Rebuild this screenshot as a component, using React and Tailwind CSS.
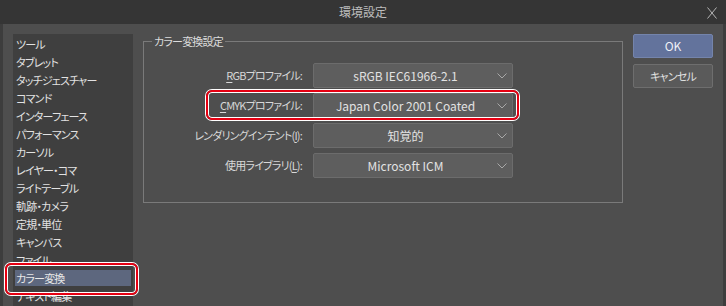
const items = [
  "ツール",
  "タブレット",
  "タッチジェスチャー",
  "コマンド",
  "インターフェース",
  "パフォーマンス",
  "カーソル",
  "レイヤー・コマ",
  "ライトテーブル",
  "軌跡・カメラ",
  "定規・単位",
  "キャンバス",
  "ファイル",
  "カラー変換",
  "テキスト編集",
];

function Chevron() {
  return (
    <svg width="10" height="6" viewBox="0 0 10 6" className="mr-[5px] shrink-0">
      <path d="M0.5 0.5 L5 5 L9.5 0.5" fill="none" stroke="#a8a8a8" strokeWidth="1" />
    </svg>
  );
}

function Row({ mnemonic, rest, value, highlight, pre }) {
  return (
    <div className="relative flex h-[25px] items-center">
      <div className="w-[150px] text-right text-[11px] tracking-[-0.8px] text-[#d8d8d8]">
        {pre}
        {mnemonic && <span className="underline underline-offset-2">{mnemonic}</span>}
        {rest}
      </div>
      <div className="ml-[11px] flex h-full w-[200px] items-center rounded-[2px] border border-[#6c6c6c] bg-[#5e5e5e]">
        <span className="flex-1 text-center text-[12px] text-[#e2e2e2]">{value}</span>
        <Chevron />
      </div>
      {highlight && (
        <div className="pointer-events-none absolute -top-[3px] left-[54px] h-[30px] w-[313px] rounded-[6px] border-2 border-[#e60012] shadow-[0_0_0_1px_#fff,inset_0_0_0_1px_#fff]" />
      )}
    </div>
  );
}

export default function App() {
  return (
    <div
      className="h-[306px] w-[726px] overflow-hidden bg-[#4e4e4e] [font-feature-settings:'palt']"
      style={{ fontFamily: '"Noto Sans CJK JP", "Noto Sans", sans-serif' }}
    >
      <div className="relative flex h-6 items-center justify-center bg-[#353535]">
        <span className="text-[12px] text-[#bdbdbd]">環境設定</span>
        <svg width="10" height="12" viewBox="0 0 10 12" className="absolute right-[9px] top-[7px]">
          <path d="M0.5 0.5 L9.5 11.5 M9.5 0.5 L0.5 11.5" stroke="#b5b5b5" strokeWidth="1" fill="none" />
        </svg>
      </div>

      <div className="flex h-[282px] border-x-[3px] border-[#3d3d3d]">
        {/* category list */}
        <div className="relative ml-[10px] mt-[10px] w-[120px] bg-[#3f3f3f] pt-[1px] text-[11px] tracking-[-0.8px]">
          {items.map((it) => (
            <div key={it} className="flex h-[18px] items-center">
              {it === "カラー変換" ? (
                <div className="mx-[2px] flex h-4 flex-1 items-center bg-[#5d677e] pl-[1px] text-[#e8e8e8]">
                  {it}
                </div>
              ) : (
                <div className="pl-[3px] text-[#e2e2e2]">{it}</div>
              )}
            </div>
          ))}
          <div className="pointer-events-none absolute left-[-8px] top-[229px] h-[32px] w-[133px] rounded-[6px] border-2 border-[#e60012] shadow-[0_0_0_1px_#fff,inset_0_0_0_1px_#fff]" />
        </div>

        {/* settings group */}
        <fieldset className="mt-[9px] ml-[10px] h-fit w-[480px] border border-[#7a7a7a] pb-[24px] pl-[8px]">
          <legend className="px-[2px] text-[11px] leading-4 tracking-[-0.8px] text-[#dcdcdc]">カラー変換設定</legend>
          <div className="flex flex-col gap-[5px] pt-[14px]">
            <Row mnemonic="R" rest="GBプロファイル:" value="sRGB IEC61966-2.1" />
            <Row mnemonic="C" rest="MYKプロファイル:" value="Japan Color 2001 Coated" highlight />
            <Row pre="レンダリングインテント(" mnemonic="I" rest="):" value="知覚的" />
            <Row pre="使用ライブラリ(" mnemonic="L" rest="):" value="Microsoft ICM" />
          </div>
        </fieldset>

        {/* buttons */}
        <div className="ml-[10px] mt-[10px] flex w-[80px] flex-col gap-[6px]">
          <button className="h-6 rounded-[2px] border border-[#7484ab] bg-[#63739c] text-[12px] text-[#eef0f6]">
            OK
          </button>
          <button className="h-6 rounded-[2px] border border-[#6e6e6e] bg-[#5a5a5a] text-[11px] tracking-[-0.8px] text-[#e0e0e0]">
            キャンセル
          </button>
        </div>
      </div>
    </div>
  );
}
